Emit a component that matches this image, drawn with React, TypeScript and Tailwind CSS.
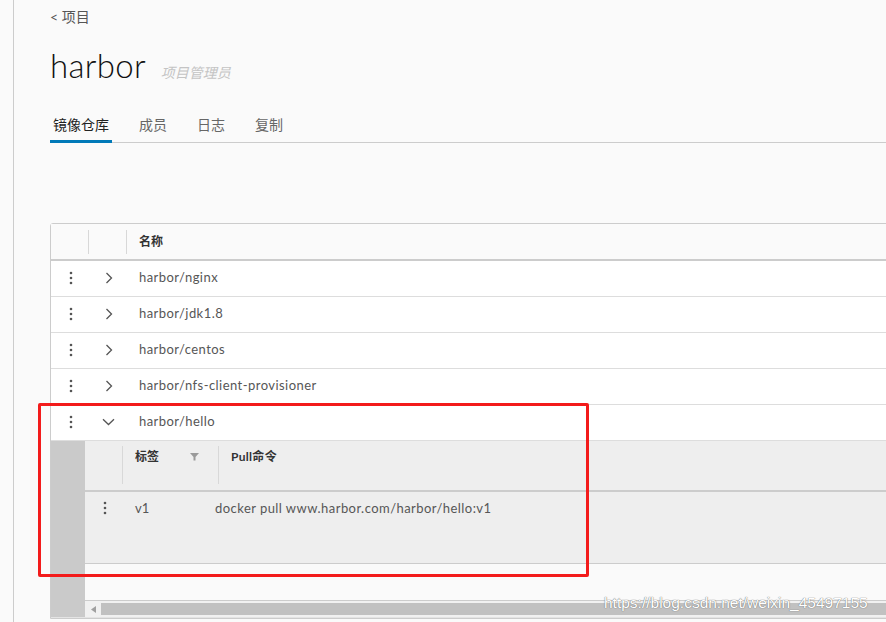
import React from "react";

function Kebab() {
  return (
    <svg width="4" height="16" viewBox="0 0 4 16" className="fill-[#555]">
      <circle cx="2" cy="3" r="1.3" />
      <circle cx="2" cy="8" r="1.3" />
      <circle cx="2" cy="13" r="1.3" />
    </svg>
  );
}

function ChevronRight() {
  return (
    <svg width="8" height="12" viewBox="0 0 8 12" fill="none">
      <path d="M1.5 1 L6.5 6 L1.5 11" stroke="#555" strokeWidth="1.3" />
    </svg>
  );
}

function ChevronDown() {
  return (
    <svg width="13" height="8" viewBox="0 0 13 8" fill="none">
      <path d="M1 1.2 L6.5 6.5 L12 1.2" stroke="#555" strokeWidth="1.3" />
    </svg>
  );
}

function FilterIcon() {
  return (
    <svg width="9" height="8" viewBox="0 0 9 8" className="fill-[#9a9a9a]">
      <path d="M0 0 H9 L5.5 4 V7.5 H3.5 V4 Z" />
    </svg>
  );
}

const repos = [
  "harbor/nginx",
  "harbor/jdk1.8",
  "harbor/centos",
  "harbor/nfs-client-provisioner",
];

export default function App() {
  return (
    <div className="relative w-[886px] h-[622px] overflow-hidden bg-[#fafafa] font-['Lato','Noto_Sans_CJK_SC',sans-serif]">
      <div className="flex h-full">
        <div className="w-[13px] shrink-0" />
        <div className="flex-1 min-w-0 border-l border-[#cccccc] pl-[36px]">
          {/* breadcrumb */}
          <div className="pt-[8px] h-[26px] text-[14px] leading-[18px] text-[#555]">
            &lt; 项目
          </div>
          {/* title */}
          <div className="mt-[19px] h-[40px] flex items-baseline">
            <span className="text-[33px] leading-[40px] font-light text-[#111] tracking-[0.3px]">
              harbor
            </span>
            <span className="ml-[15px] text-[14px] italic text-[#c4c4c4]">
              项目管理员
            </span>
          </div>
          {/* tabs */}
          <div className="mt-[22px] h-[36px] border-b border-[#cccccc] flex gap-6 w-[900px]">
            <div className="h-[36px] pt-[2px] px-[3px] flex items-center border-b-[3px] border-[#0079b8] text-[14px] text-[#222]">
              镜像仓库
            </div>
            <div className="h-[36px] pt-[2px] px-[3px] flex items-center border-b-[3px] border-transparent text-[14px] text-[#666]">
              成员
            </div>
            <div className="h-[36px] pt-[2px] px-[3px] flex items-center border-b-[3px] border-transparent text-[14px] text-[#666]">
              日志
            </div>
            <div className="h-[36px] pt-[2px] px-[3px] flex items-center border-b-[3px] border-transparent text-[14px] text-[#666]">
              复制
            </div>
          </div>

          {/* datagrid */}
          <div className="mt-[80px] w-[900px] border border-[#cccccc] rounded-tl-[3px] bg-white">
            {/* header */}
            <div className="h-[37px] bg-[#fafafa] border-b-2 border-[#cccccc] flex items-center text-[12px] font-bold text-[#333]">
              <div className="w-[37px]" />
              <div className="w-px h-[24px] bg-[#d8d8d8]" />
              <div className="w-[37px]" />
              <div className="w-px h-[24px] bg-[#d8d8d8]" />
              <div className="pl-[12px]">名称</div>
            </div>
            {/* rows */}
            {repos.map((r) => (
              <div
                key={r}
                className="h-[36px] pb-[2px] border-b border-[#dddddd] flex items-center text-[13px] text-[#565656]"
              >
                <div className="w-[39px] flex justify-center">
                  <Kebab />
                </div>
                <div className="w-[37px] flex justify-center">
                  <ChevronRight />
                </div>
                <div className="pl-[12px] tracking-[0.45px]">{r}</div>
              </div>
            ))}
            <div className="h-[36px] pb-[2px] border-b border-[#dddddd] flex items-center text-[13px] text-[#565656]">
              <div className="w-[39px] flex justify-center">
                <Kebab />
              </div>
              <div className="w-[37px] flex justify-center">
                <ChevronDown />
              </div>
              <div className="pl-[12px] tracking-[0.45px]">harbor/hello</div>
            </div>
            {/* expanded */}
            <div className="flex h-[177px] border-b border-[#e4e4e4]">
              <div className="w-[34px] bg-[#cacaca]" />
              <div className="flex-1 flex flex-col">
                <div className="h-[51px] bg-[#eeeeee] border-b-2 border-[#cccccc] flex items-start text-[12px] font-bold text-[#333]">
                  <div className="w-[37px]" />
                  <div className="mt-[5px] w-px h-[38px] bg-[#d8d8d8]" />
                  <div className="w-[95px] pl-[12px] pt-[7px] leading-[18px] flex items-center justify-between pr-[19px]">
                    <span>标签</span>
                    <FilterIcon />
                  </div>
                  <div className="mt-[5px] w-px h-[38px] bg-[#d8d8d8]" />
                  <div className="pl-[12px] pt-[7px] leading-[18px] tracking-[0.3px]">Pull命令</div>
                </div>
                <div className="h-[72px] bg-[#eeeeee] border-b border-[#cccccc] flex items-start text-[13px] text-[#565656]">
                  <div className="w-[40px] pt-[8px] flex justify-center">
                    <Kebab />
                  </div>
                  <div className="w-[90px] pl-[10px] pt-[7px] leading-[18px]">v1</div>
                  <div className="pt-[7px] leading-[18px] tracking-[0.45px]">
                    docker pull www.harbor.com/harbor/hello:v1
                  </div>
                </div>
                <div className="h-[37px] bg-[#fafafa] border-b border-[#cccccc]" />
                <div className="h-[16px] bg-[#f1f1f1] flex">
                  <div className="w-[16px] flex items-center justify-center">
                    <svg width="5" height="7" viewBox="0 0 5 7" className="fill-[#a0a0a0]">
                      <path d="M5 0 V7 L0 3.5 Z" />
                    </svg>
                  </div>
                  <div className="flex-1 my-[2px] bg-[#c1c1c1]" />
                </div>
              </div>
            </div>
          </div>
        </div>
      </div>

      {/* red annotation box */}
      <div className="absolute left-[38px] top-[403px] w-[551px] h-[174px] border-[3px] border-[#f31b1b] rounded-[2px]" />

      {/* watermark */}
      <div className="absolute left-[604px] top-[593px] text-[15.5px] leading-[20px] text-white font-['Liberation_Sans',sans-serif] [text-shadow:0_0_1px_#777,0_0_1px_#777]">
        https://blog.csdn.net/weixin_45497155
      </div>
    </div>
  );
}
